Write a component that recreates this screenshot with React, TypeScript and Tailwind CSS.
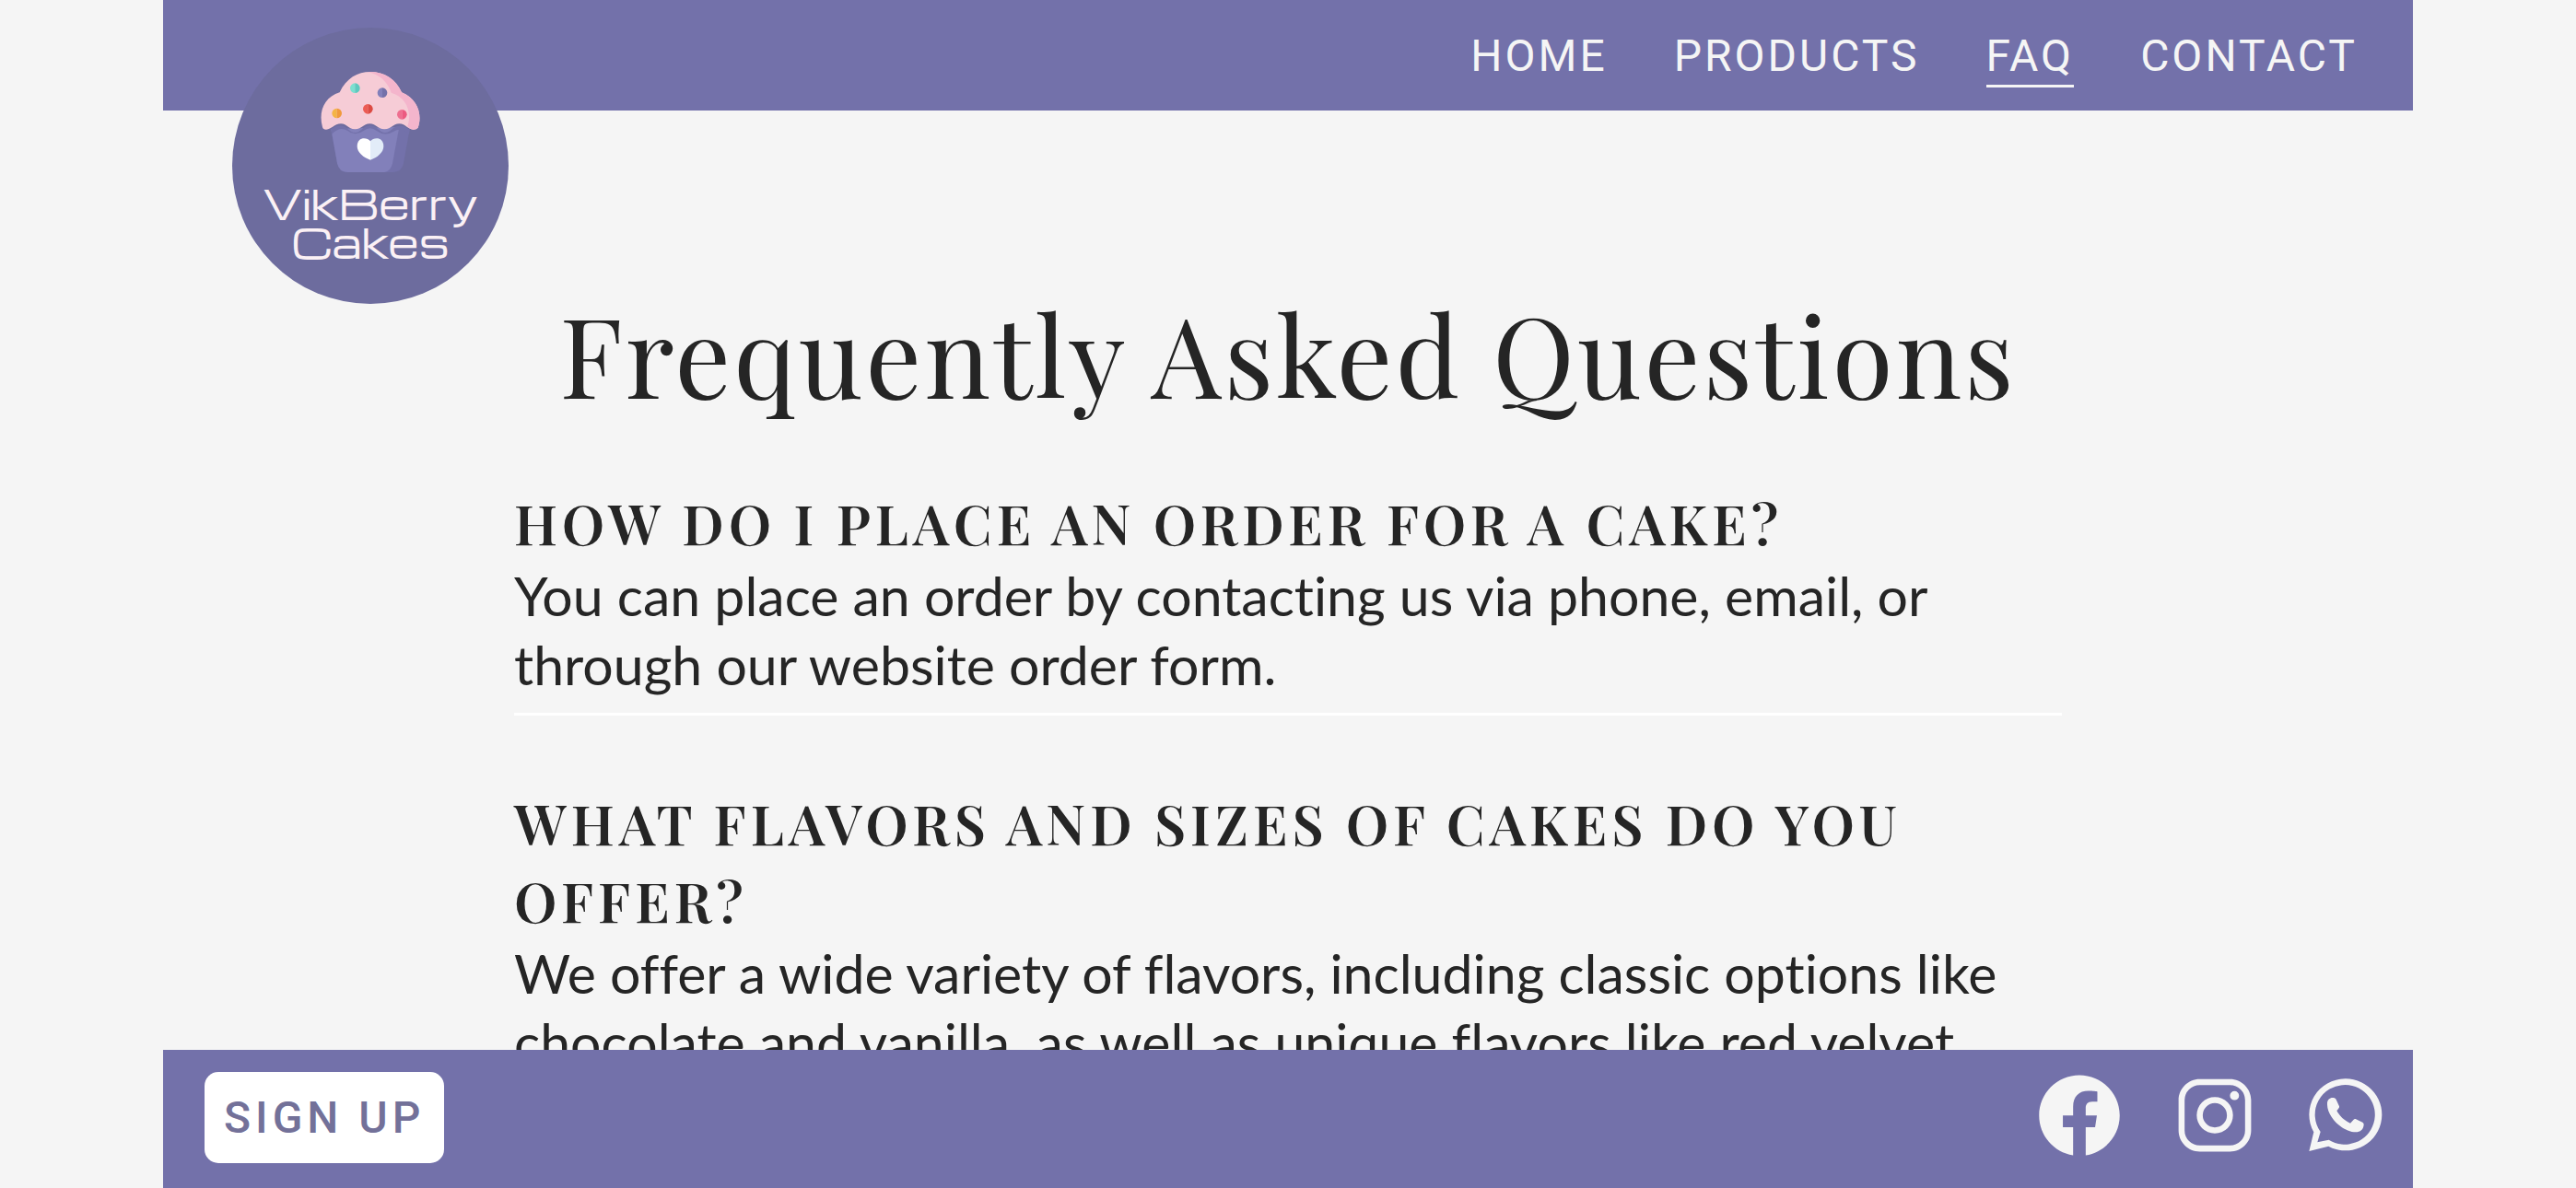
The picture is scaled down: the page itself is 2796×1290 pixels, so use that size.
import React from "react";
import { IoLogoFacebook, IoLogoInstagram } from "react-icons/io5";

const serif = "font-['Playfair_Display','Liberation_Serif',serif]";

const navItems = [
  { label: "Home", href: "#home", active: false },
  { label: "Products", href: "#products", active: false },
  { label: "FAQ", href: "#faq", active: true },
  { label: "Contact", href: "#contact", active: false },
];

const faqs = [
  {
    question: "How do I place an order for a cake?",
    answer:
      "You can place an order by contacting us via phone, email, or through our website order form.",
  },
  {
    question: "What flavors and sizes of cakes do you offer?",
    answer:
      "We offer a wide variety of flavors, including classic options like chocolate and vanilla, as well as unique flavors like red velvet",
  },
];

const sprinkles = [
  { x: 112, y: 53, light: "#7be0d0", dark: "#5ccabf" },
  { x: 201, y: 68, light: "#8280ba", dark: "#7371aa" },
  { x: 154, y: 121, light: "#ec5b54", dark: "#dc4a42" },
  { x: 53, y: 135, light: "#f4b445", dark: "#f09a3c" },
  { x: 265, y: 139, light: "#ee6f90", dark: "#ec5a80" },
];

function Cupcake() {
  return (
    <svg viewBox="0 0 324 330" className="h-[110px] w-[108px]" aria-hidden="true">
      <path d="M34 186 L54 298 Q60 327 88 327 H236 Q264 327 270 298 L290 186 Z" fill="#7371aa" />
      <path d="M34 186 L54 298 Q60 327 88 327 H208 Q228 325 234 298 L256 180 Z" fill="#8280ba" />
      <path d="M34 186 Q64 164 86 184 Q112 212 138 184 Q162 164 184 184 Q210 212 236 184 Q262 164 290 190 L288 204 Q262 178 238 194 Q210 212 182 192 Q162 176 140 192 Q112 212 88 192 Q62 176 36 204 Z" fill="#7371aa" />
      <path d="M6 180 C-8 130 12 82 62 67 C84 20 120 0 162 0 C206 0 244 22 264 67 C316 88 332 140 317 182 Q312 188 302 188 C282 188 278 169 256 169 C234 169 232 187 208 187 C184 187 182 169 160 169 C138 169 136 187 112 187 C88 187 88 169 66 169 C44 169 36 188 18 188 Q8 188 6 180 Z" fill="#f6ccd6" />
      <path d="M152 0 C206 -2 244 22 264 67 C316 88 332 140 317 182 Q312 188 302 188 C292 188 288 182 283 177 C298 132 280 82 230 68 C218 32 192 8 152 0 Z" fill="#f4b5cc" />
      {sprinkles.map((s) => (
        <g key={s.light} transform={`translate(${s.x} ${s.y})`}>
          <path d="M0 -16 A16 16 0 0 0 0 16 Z" fill={s.light} />
          <path d="M0 -16 A16 16 0 0 1 0 16 Z" fill={s.dark} />
        </g>
      ))}
      <path d="M162 226 C150 212 119 212 119 243 C119 262 140 280 162 287 Z" fill="#ffffff" />
      <path d="M162 226 C174 212 205 212 205 243 C205 262 184 280 162 287 Z" fill="#e2ecf8" />
    </svg>
  );
}

function WhatsappIcon() {
  return (
    <svg viewBox="-16 -16 270 270" className="size-[90px]" fill="currentColor" aria-hidden="true">
      <path
        fillRule="evenodd"
        d="M118 0 A118 117 0 1 1 63 220 L0 236 L15 174 A118 117 0 0 1 118 0 Z M118 20 A98 97 0 0 0 37 173 L27 207 L64 199 A98 97 0 1 0 118 20 Z"
      />
      <path d="M59 78 C60 69 67 62 76 62 C82 62 86 64 88 68 L98 90 C99 94 96 98 90 104 C98 120 114 136 134 145 L145 133 Q147 130 151 131 L174 142 Q178 144 178 149 C177 166 166 174 152 174 C110 174 60 126 59 85 Z" />
    </svg>
  );
}

export default function App() {
  return (
    <div className="h-screen overflow-hidden bg-[#f5f5f5] px-[177px] text-[#252525]">
      <div className="flex h-full flex-col">
        <header className="relative z-10 flex h-[120px] shrink-0 items-start justify-end bg-[#7371aa] pr-[60px] pt-[30px]">
          <a
            href="#home"
            aria-label="VikBerry Cakes"
            className="absolute left-[75px] top-[30px] flex size-[300px] flex-col items-center rounded-full bg-[#6d6c9e] pt-[48px]"
          >
            <Cupcake />
            <span className="mt-[11px] text-center font-['Michroma','DejaVu_Sans',sans-serif] text-[43px] leading-[42px] text-[#fbf1f5]">
              VikBerry
              <br />
              Cakes
            </span>
          </a>
          <nav className="flex gap-[72px] font-['Roboto',sans-serif] text-[48px] leading-[62px] tracking-[3px] text-[#f5f5f5]">
            {navItems.map((item) => (
              <a
                key={item.label}
                href={item.href}
                aria-current={item.active ? "page" : undefined}
                className={item.active ? "border-b-3 border-[#f5f5f5] uppercase" : "uppercase"}
              >
                {item.label}
              </a>
            ))}
          </nav>
        </header>

        <main className="min-h-0 flex-1 overflow-hidden">
          <div className="mx-auto max-w-[1680px] pt-[183px]">
            <h1 className={`${serif} text-center text-[120px] leading-[160px] tracking-[3px] whitespace-nowrap`}>
              Frequently Asked Questions
            </h1>
            <div className="mt-[62px] flex flex-col gap-[74px]">
              {faqs.map((faq) => (
                <section key={faq.question} className="border-b-3 border-white pb-[15px]">
                  <h2 className={`${serif} text-[60px] font-semibold uppercase leading-[84px] tracking-[5px]`}>
                    {faq.question}
                  </h2>
                  <p className="font-['Lato',sans-serif] text-[59px] leading-[75px] [font-variant-ligatures:no-common-ligatures]">
                    {faq.answer}
                  </p>
                </section>
              ))}
            </div>
          </div>
        </main>

        <footer className="flex h-[150px] shrink-0 items-start justify-between bg-[#7371aa] pl-[45px] pr-[28px] pt-[24px]">
          <button
            type="button"
            className="h-[99px] rounded-[15px] bg-white px-[21px] font-['Roboto',sans-serif] text-[48px] font-medium uppercase tracking-[5px] text-[#737199]"
          >
            Sign up
          </button>
          <div className="flex h-[94px] items-center gap-[52px] text-[#f5f5f5]">
            <a href="#facebook" aria-label="Facebook">
              <IoLogoFacebook className="size-[100px]" />
            </a>
            <a href="#instagram" aria-label="Instagram">
              <IoLogoInstagram className="size-[90px]" />
            </a>
            <a href="#whatsapp" aria-label="WhatsApp">
              <WhatsappIcon />
            </a>
          </div>
        </footer>
      </div>
    </div>
  );
}
